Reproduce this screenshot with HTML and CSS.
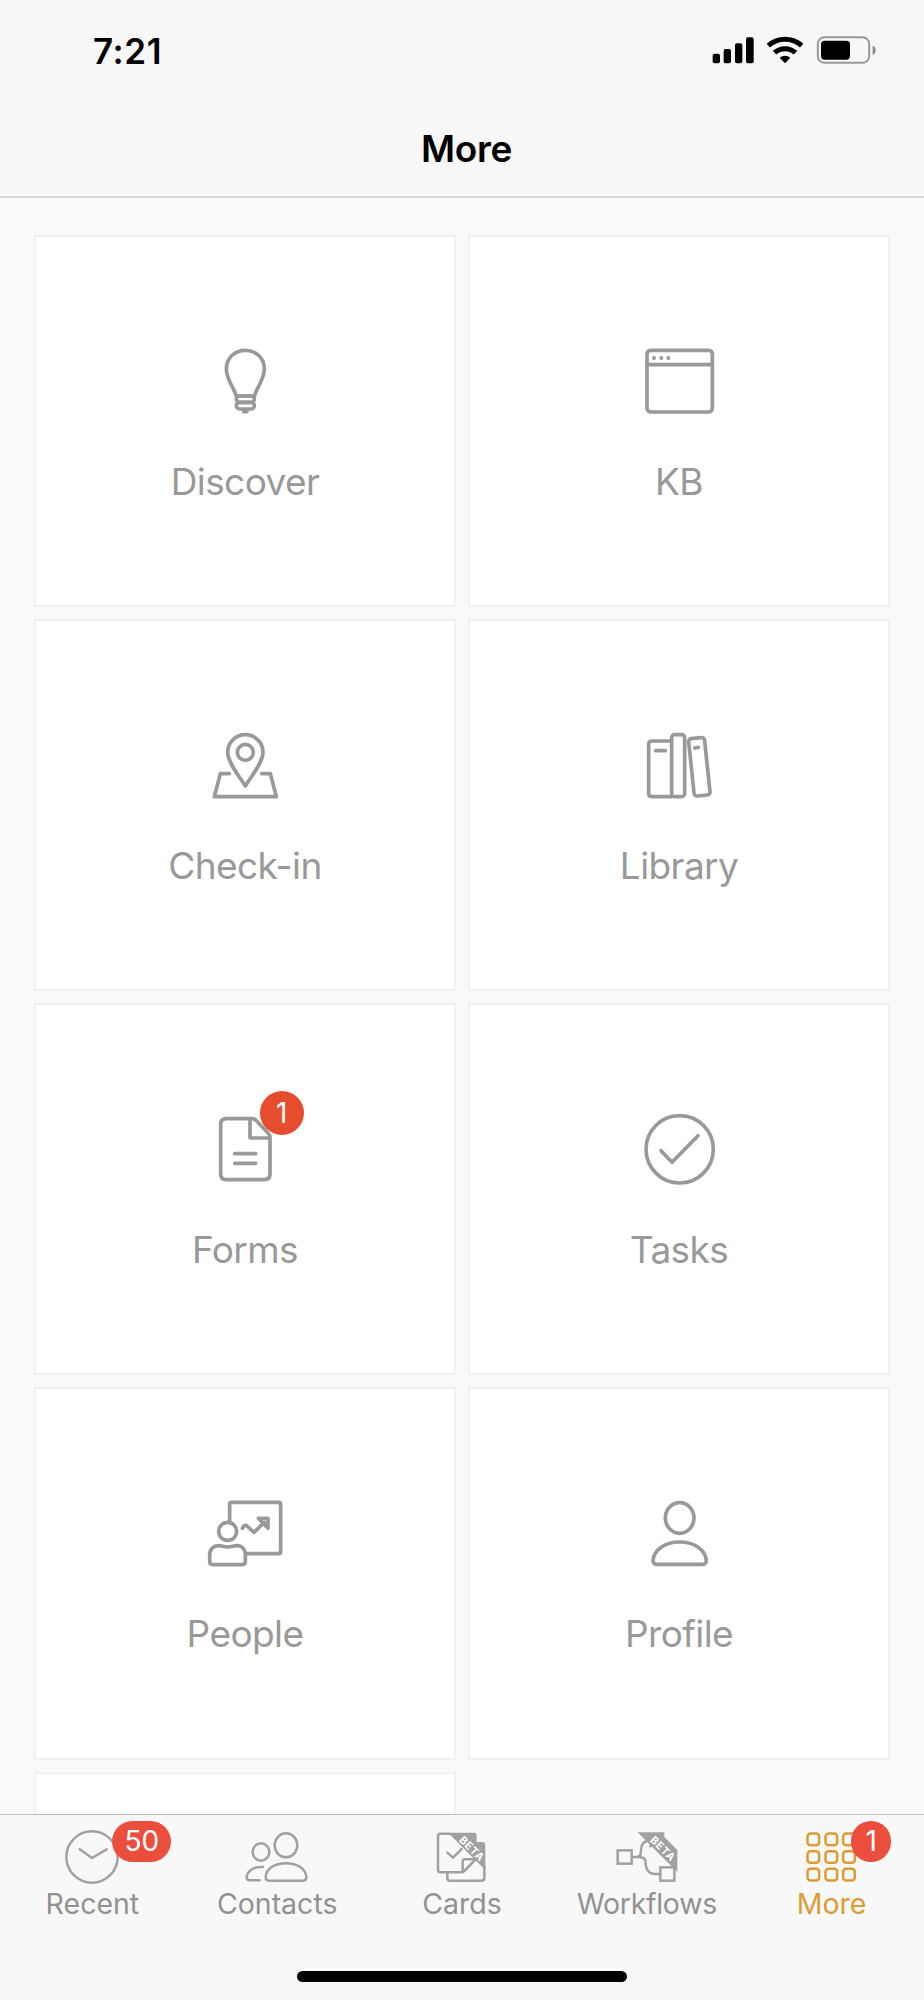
FILE: index.html
```
<!DOCTYPE html>
<html lang="en">
<head>
    <meta charset="UTF-8">
    <meta name="viewport" content="width=device-width, initial-scale=1.0">
    <title>More</title>
    <link rel="stylesheet" href="styles.css">
</head>
<body>
    <header class="header">
        <div class="status-bar">
            <span class="time">7:21</span>
            <svg class="status-icons" viewBox="0 0 495 90">
                <rect x="2" y="53" width="22" height="29" rx="6"/>
                <rect x="35" y="39" width="22" height="43" rx="6"/>
                <rect x="69" y="22" width="22" height="60" rx="6"/>
                <rect x="102" y="4" width="23" height="78" rx="6"/>
                <g fill="none" stroke="#000" stroke-width="15">
                    <path d="M169 29A75 75 0 0 1 269 29"/>
                    <path d="M187.500 50A47 47 0 0 1 250.500 50"/>
                </g>
                <path d="M203 65A25 25 0 0 1 235 65L219 82Z"/>
                <rect x="317.500" y="3.500" width="154" height="77" rx="20" fill="none" stroke="#999" stroke-width="6"/>
                <rect x="327" y="14" width="87" height="57" rx="11"/>
                <path d="M482 29Q491 33 491 43Q491 53 482 57Z" fill="#888"/>
            </svg>
        </div>
        <h1 class="title">More</h1>
    </header>

    <main class="content">
        <div class="grid">
            <a class="tile">
                <div class="tile-icon">
                    <svg class="icon" viewBox="0 0 240 240">
                        <path d="M93 165C91 145 64 118 64 84C64 51 89 28 121 28C153 28 178 51 178 84C178 118 151 145 149 165Z"/>
                        <rect x="94" y="165" width="54" height="19" rx="9"/>
                        <rect x="94" y="184" width="54" height="20" rx="10"/>
                        <path d="M116 212H126"/>
                    </svg>
                </div>
                <span class="label">Discover</span>
            </a>
            <a class="tile">
                <div class="tile-icon">
                    <svg class="icon" viewBox="0 0 240 240">
                        <rect x="24" y="28" width="196" height="185" rx="11"/>
                        <path d="M24 71H220"/>
                        <g class="dots">
                            <circle cx="45" cy="51" r="6"/>
                            <circle cx="67" cy="51" r="6"/>
                            <circle cx="88" cy="51" r="6"/>
                        </g>
                    </svg>
                </div>
                <span class="label">KB</span>
            </a>
            <a class="tile">
                <div class="tile-icon">
                    <svg class="icon" viewBox="0 0 240 240">
                        <path d="M121 183C108 160 68 114 68 82A53 53 0 0 1 174 82C174 114 134 160 121 183Z"/>
                        <circle cx="121" cy="82" r="24"/>
                        <path d="M73 146H46L28 215H214L196 146H170"/>
                    </svg>
                </div>
                <span class="label">Check-in</span>
            </a>
            <a class="tile">
                <div class="tile-icon">
                    <svg class="icon" viewBox="0 0 240 240">
                        <path d="M97 48H39Q29 48 29 58V205Q29 215 39 215H97"/>
                        <rect x="98" y="29" width="39" height="186" rx="9"/>
                        <rect x="157" y="39" width="48" height="173" rx="9" transform="rotate(-6 181 125.500)"/>
                        <path d="M50 77H79M167 69L178 67"/>
                    </svg>
                </div>
                <span class="label">Library</span>
            </a>
            <a class="tile">
                <div class="tile-icon">
                    <svg class="icon" viewBox="0 0 240 240">
                        <path d="M142 29H64Q47 29 47 46V195Q47 212 64 212H178Q195 212 195 195V86Q195 78 189 72L155 36Q149 29 142 29Z"/>
                        <path d="M135 29V87H195M89 134H152M89 163H152"/>
                    </svg>
                    <span class="badge">1</span>
                </div>
                <span class="label">Forms</span>
            </a>
            <a class="tile">
                <div class="tile-icon">
                    <svg class="icon" viewBox="0 0 240 240">
                        <circle cx="122" cy="121" r="101"/>
                        <path d="M66 125L99 160L177 80"/>
                    </svg>
                </div>
                <span class="label">Tasks</span>
            </a>
            <a class="tile">
                <div class="tile-icon">
                    <svg class="icon" viewBox="0 0 240 240">
                        <path d="M74 84V34Q74 28 80 28H221Q227 28 227 34V176Q227 182 221 182H126"/>
                        <circle cx="68" cy="115" r="27"/>
                        <path d="M14 205V186C14 168 26 158 40 158C51 158 55 162 68 162C81 162 85 158 96 158C110 158 121 168 121 186V205Q121 215 111 215H24Q14 215 14 205Z"/>
                        <path d="M112 106Q119 93 126 99L147 118L178 88M160 76H189V106Z"/>
                    </svg>
                </div>
                <span class="label">People</span>
            </a>
            <a class="tile">
                <div class="tile-icon">
                    <svg class="icon" viewBox="0 0 240 240">
                        <ellipse cx="122" cy="75" rx="43" ry="46"/>
                        <path d="M53 214H191Q202 214 202 202C200 172 168 147 122 147C76 147 44 172 42 202Q42 214 53 214Z"/>
                    </svg>
                </div>
                <span class="label">Profile</span>
            </a>
            <a class="tile"></a>
        </div>
    </main>

    <footer class="footer">
        <nav class="tabs">
            <a class="tab">
                <div class="tab-icon">
                    <svg class="icon" viewBox="0 0 210 210">
                        <circle cx="105" cy="111" r="77"/>
                        <path d="M68 88L105 114L149 88"/>
                    </svg>
                    <span class="badge tab-badge wide">50</span>
                </div>
                <span class="tab-label">Recent</span>
            </a>
            <a class="tab">
                <div class="tab-icon">
                    <svg class="icon" viewBox="0 0 210 210">
                        <ellipse cx="57" cy="96" rx="25" ry="26"/>
                        <ellipse cx="132" cy="76" rx="34" ry="36"/>
                        <path d="M81 182H184Q193 182 193 172C192 146 166 130 132 130C98 130 72 146 71 172Q71 182 81 182Z"/>
                        <path d="M63 141C34 139 16 153 14 172Q14 181 23 181H53"/>
                    </svg>
                </div>
                <span class="tab-label">Contacts</span>
            </a>
            <a class="tab">
                <div class="tab-icon">
                    <svg class="icon" viewBox="0 0 210 210">
                        <path d="M66 41H40Q33 41 33 48V150Q33 157 40 157H102Q108 157 112 153L148 116"/>
                        <path d="M61 157V174Q61 182 69 182H164Q172 182 172 174V140"/>
                        <path d="M61 98L78 113L104 87M107 152V124Q107 118 113 118H145"/>
                        <path class="ribbon" d="M63 38H141Q149 38 149 46V66H165Q175 66 175 76V150Z"/>
                        <text class="ribbon-text" x="134" y="97" transform="rotate(45 134 87)">BETA</text>
                    </svg>
                </div>
                <span class="tab-label">Cards</span>
            </a>
            <a class="tab">
                <div class="tab-icon">
                    <svg class="icon" viewBox="0 0 210 210">
                        <g class="square">
                            <rect x="17" y="91" width="42" height="40"/>
                            <rect x="145" y="142" width="42" height="40"/>
                        </g>
                        <path d="M61 111H75C98 111 74 70 106 63M61 111H80C108 111 98 130 103 143Q109 162 128 162H143"/>
                        <path class="ribbon" d="M77 37H157V51L196 90V156L182 142L120 80L112 83V72Z"/>
                        <text class="ribbon-text" x="152" y="97" transform="rotate(45 152 87)">BETA</text>
                    </svg>
                </div>
                <span class="tab-label long">Workflows</span>
            </a>
            <a class="tab active">
                <div class="tab-icon">
                    <svg class="icon" viewBox="0 0 210 210">
                        <rect x="31.500" y="40.500" width="35" height="35" rx="9"/>
                        <rect x="85.500" y="40.500" width="35" height="35" rx="9"/>
                        <rect x="138.500" y="40.500" width="35" height="35" rx="9"/>
                        <rect x="31.500" y="93.500" width="35" height="35" rx="9"/>
                        <rect x="85.500" y="93.500" width="35" height="35" rx="9"/>
                        <rect x="138.500" y="93.500" width="35" height="35" rx="9"/>
                        <rect x="31.500" y="146.500" width="35" height="35" rx="9"/>
                        <rect x="85.500" y="146.500" width="35" height="35" rx="9"/>
                        <rect x="138.500" y="146.500" width="35" height="35" rx="9"/>
                    </svg>
                    <span class="badge tab-badge">1</span>
                </div>
                <span class="tab-label">More</span>
            </a>
        </nav>
        <div class="home-indicator"></div>
    </footer>
</body>
</html>
```
FILE: styles.css
```
* {
    box-sizing: border-box;
}

body {
    margin: 0;
    height: 2000px;
    display: flex;
    flex-direction: column;
    overflow: hidden;
    background-color: #f9f9f9;
    font-family: Inter, "Liberation Sans", sans-serif;
    color: #000;
}

.header {
    height: 198px;
    flex-shrink: 0;
    background-color: #f7f7f7;
    border-bottom: 2px solid #d8d8d8;
}

.status-bar {
    height: 101px;
    padding: 0 47px 0 93px;
    display: flex;
    justify-content: space-between;
    align-items: center;
}

.time {
    font-size: 35px;
    font-weight: 600;
    line-height: 42px;
    letter-spacing: 0.6px;
}

.status-icons {
    width: 165px;
    height: 30px;
}

.title {
    margin: 0;
    padding-left: 9px;
    font-size: 37px;
    font-weight: 600;
    line-height: 95px;
    text-align: center;
    letter-spacing: -0.4px;
}

.content {
    flex: 1;
    min-height: 0;
    overflow: hidden;
    padding: 36.600px 34px 0;
}

.grid {
    display: grid;
    grid-template-columns: 1fr 1fr;
    grid-auto-rows: 372.300px;
    gap: 12px;
}

.tile {
    display: flex;
    flex-direction: column;
    align-items: center;
    padding-top: 104px;
    background-color: #fff;
    border: 2px solid #f1f1f1;
}

.tile-icon {
    position: relative;
    width: 80px;
    height: 80px;
}

.icon {
    display: block;
    width: 100%;
    height: 100%;
    fill: none;
    stroke: #999;
    stroke-width: 11;
    stroke-linecap: round;
    stroke-linejoin: round;
}

.dots {
    fill: #999;
    stroke: none;
}

.label {
    margin-top: 39px;
    font-size: 37px;
    line-height: 44px;
    color: #999;
    letter-spacing: -0.6px;
}

.badge {
    position: absolute;
    left: 55px;
    top: -18px;
    width: 43.500px;
    height: 43.500px;
    border-radius: 22px;
    background-color: #e64c2e;
    color: #fff;
    font-size: 28px;
    line-height: 44px;
    text-align: center;
}

.footer {
    height: 186px;
    flex-shrink: 0;
    background-color: #f8f8f8;
    border-top: 1px solid #bdbdbd;
}

.tabs {
    display: flex;
    height: 156px;
    padding-top: 5px;
}

.tab {
    flex: 1;
    display: flex;
    flex-direction: column;
    align-items: center;
    color: #929292;
}

.tab-icon {
    position: relative;
    width: 70px;
    height: 70px;
}

.tab .icon {
    stroke: #a1a1a1;
    stroke-width: 7.500;
}

.tab .square {
    stroke-linejoin: miter;
}

.icon .ribbon {
    fill: #a1a1a1;
    stroke: none;
}

.icon .ribbon-text {
    fill: #fff;
    stroke: none;
    font-size: 32px;
    font-weight: 700;
    letter-spacing: 2px;
    text-anchor: middle;
}

.tab-label {
    font-size: 28.500px;
    line-height: 28px;
}

.tab-label.long {
    letter-spacing: -0.3px;
}

.tab.active {
    color: #dc9c33;
}

.tab.active .icon {
    stroke: #dc9c33;
}

.tab-badge {
    left: 54.300px;
    top: 1px;
    width: 40.600px;
    height: 40.600px;
    background-color: #eb4e3d;
    line-height: 40px;
}

.tab-badge.wide {
    left: 55px;
    width: 59px;
}

.home-indicator {
    width: 330px;
    height: 11px;
    margin: 0 auto;
    border-radius: 6px;
    background-color: #000;
}
```
